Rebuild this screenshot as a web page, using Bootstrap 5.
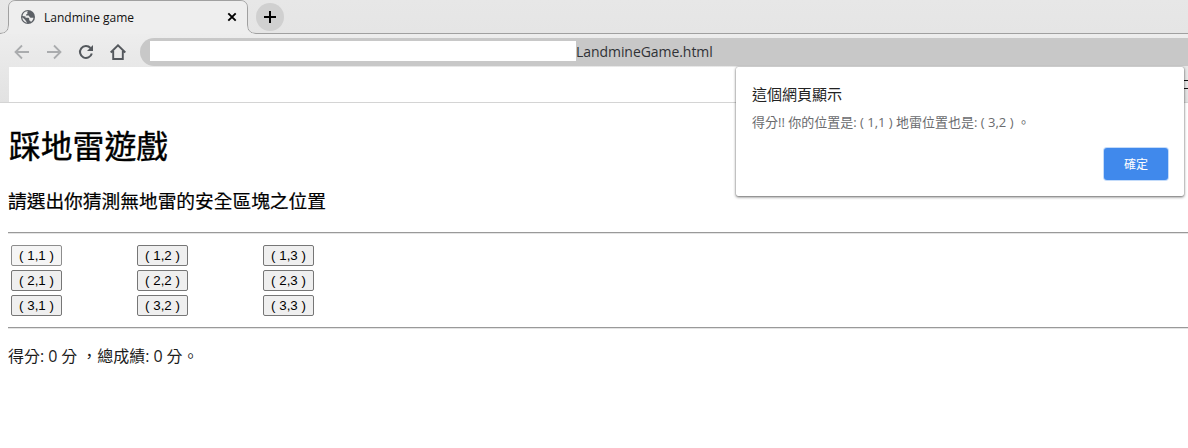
<!DOCTYPE html>
<html lang="zh-Hant">
<head>
<meta charset="utf-8">
<meta name="viewport" content="width=device-width, initial-scale=1">
<title>Landmine game</title>
<link href="https://cdn.jsdelivr.net/npm/bootstrap@5.3.0/dist/css/bootstrap.min.css" rel="stylesheet">
<style>
body{font-family:"Open Sans","Noto Sans CJK TC",sans-serif;font-size:16px;line-height:24px;color:#000;background:#fff;height:448px;overflow:hidden;white-space:nowrap}
.chrome{height:103px;background:linear-gradient(#e7e7e7 0,#e5e5e5 33px,#ededed 34px,#e2e2e2 102px);border-bottom:1px solid #d4d4d4}
.tabstrip{height:34px}
.outline{left:0;top:0}
.globe{margin-left:20px}
.tab-label{margin:2px 0 0 8px;width:183px;font-size:12px;color:#111}
.new-tab{width:28px;height:28px;margin-left:19px;background:#d0d0d0}
.toolbar{height:33px;padding:3px 0 0 14px}
.tool{width:16px;height:16px;margin:0 16px 0 0}
.omnibox{height:28px;margin-left:-2px;padding:0 0 2px 10px;border-radius:14px 0 0 14px;background:#c8c8c8;font-size:14px;color:#303236}
.url{letter-spacing:-.06px;padding-top:1px}
.masked{width:426px;height:20px;background:#fff}
.bookmarks{height:35px;margin-left:9px}
.bookmark-fill{width:1174px}
.bookmark-end{width:5px;height:9px;border:1px solid #111;border-width:1px 0;margin-top:13px}
.page{padding-left:8px}
.page h1{font-size:31.8px;line-height:42px;font-weight:400;margin:22px 0 0 1px;-webkit-text-stroke:.4px #000}
.page h2{font-size:18.72px;line-height:26px;font-weight:400;margin:21px 0 0;-webkit-text-stroke:.2px #000}
.rule{height:2px;border-top:1px solid #999;border-bottom:1px solid #e4e4e4}
.rule-top{margin-top:18px}
.board{display:grid;grid-template-columns:repeat(3,126px);grid-auto-rows:21px;row-gap:4px;padding:11px 0 11px 3px}
.cell{width:51px;height:21px;padding:0;border:1px solid #767676;border-radius:2px;background:#efefef;color:#000;font:13.33px/19px "Liberation Sans",sans-serif;text-align:center}
.cell:first-child{background:#f5f5f5;border-color:#8d8d8d}
.score{margin-top:15px;color:#1c1c1c;word-spacing:-.2px}
.dialog{left:736px;top:67px;width:448px;height:129px;background:#fff;border-radius:2px;padding:16px 16px 0;box-shadow:0 0 1px rgba(0,0,0,.4),0 1px 3px rgba(0,0,0,.6)}
.dialog-title{font-size:15px;line-height:22px;color:#222}
.dialog-text{font-size:13px;line-height:20px;color:#6a6b6e;margin-top:7px}
.ok{width:64px;height:32px;border:0;border-radius:3px;background:#4089ec;color:#fff;font-size:12px;line-height:32px;padding:1px 0 0;margin-top:16px;box-shadow:0 0 0 1px #c3dbfa}
</style>
</head>
<body>
<header class="chrome">
  <div class="tabstrip d-flex align-items-center position-relative">
    <svg class="outline position-absolute" width="1188" height="34"><path d="M0 33.500Q8.500 33.500 8.500 25V8Q8.500.500 16 .500H240Q247.500.500 247.500 8V25Q247.500 33.500 256 33.500H1188V35H0Z" fill="none" stroke="#a0a0a0"/><path d="M1 34Q9 33 9 25V8Q9 1 16 1H240Q247 1 247 8V25Q247 33 255 34Z" fill="#eee"/></svg>
    <div class="d-flex align-items-center position-relative w-100">
      <svg class="globe" width="16" height="16" viewBox="0 0 16 16"><circle cx="8" cy="8" r="7" fill="#5c6066"/><path d="M8.300 2.300C7.200 3 7 3.900 7.600 4.500C6.600 5 6 5.600 5.900 6.600H8.300C9.300 6.700 9.300 8.700 10.600 8.700H13.500C13.200 10.500 12.200 12 10.800 12.900C10.600 11.900 9.900 11.600 9.200 11.600V9.700C9.100 8.900 8.500 8.700 7.900 8.700H5.500V7.500L2.500 7C2.800 4.100 5.300 2 8.300 2.300Z" fill="#eee"/><path d="M2.300 8.200L5.500 11.200C5.600 12.100 6 12.600 6.800 12.800V13.700C4.200 13.200 2.300 11 2.300 8.200Z" fill="#eee"/></svg>
      <span class="tab-label">Landmine game</span>
      <svg width="10" height="10" viewBox="0 0 10 10"><path d="M1.300 1.300L8.700 8.700M8.700 1.300L1.300 8.700" stroke="#000" stroke-width="1.900"/></svg>
      <span class="new-tab rounded-circle d-flex align-items-center justify-content-center"><svg width="12" height="12"><path d="M6 0V12M0 6H12" stroke="#000" stroke-width="2"/></svg></span>
    </div>
  </div>
  <nav class="toolbar d-flex align-items-center">
    <svg class="tool" viewBox="0 0 16 16"><path d="M15 8H2M8 1.500L1.500 8L8 14.500" fill="none" stroke="#aaacae" stroke-width="1.800"/></svg>
    <svg class="tool" viewBox="0 0 16 16"><path d="M1 8H14M8 1.500L14.500 8L8 14.500" fill="none" stroke="#aaacae" stroke-width="1.800"/></svg>
    <svg class="tool" viewBox="0 0 16 16"><path d="M13.800 9.500A6 6 0 1 1 12.500 4" fill="none" stroke="#54585d" stroke-width="2"/><path d="M15 1V7H9Z" fill="#54585d"/></svg>
    <svg class="tool" viewBox="0 0 16 16"><path d="M.700 8.500L8 1.300L15.300 8.500M3.200 7V15H12.800V7" fill="none" stroke="#54585d" stroke-width="1.900"/></svg>
    <div class="omnibox flex-grow-1 d-flex align-items-center"><span class="masked"></span><span class="url">LandmineGame.html</span></div>
  </nav>
  <div class="bookmarks d-flex"><span class="bookmark-fill bg-white"></span><span class="bookmark-end"></span></div>
</header>
<main class="page">
  <h1>踩地雷遊戲</h1>
  <h2>請選出你猜測無地雷的安全區塊之位置</h2>
  <div class="rule rule-top"></div>
  <div class="board">
    <button class="cell">( 1,1 )</button><button class="cell">( 1,2 )</button><button class="cell">( 1,3 )</button>
    <button class="cell">( 2,1 )</button><button class="cell">( 2,2 )</button><button class="cell">( 2,3 )</button>
    <button class="cell">( 3,1 )</button><button class="cell">( 3,2 )</button><button class="cell">( 3,3 )</button>
  </div>
  <div class="rule"></div>
  <p class="score mb-0">得分: 0 分 ，總成績: 0 分。</p>
</main>
<section class="dialog position-absolute d-flex flex-column" role="dialog">
  <div class="dialog-title">這個網頁顯示</div>
  <div class="dialog-text">得分!! 你的位置是: ( 1,1 ) 地雷位置也是: ( 3,2 ) 。</div>
  <button class="ok align-self-end">確定</button>
</section>
<script src="https://cdn.jsdelivr.net/npm/bootstrap@5.3.0/dist/js/bootstrap.bundle.min.js"></script>
</body>
</html>
